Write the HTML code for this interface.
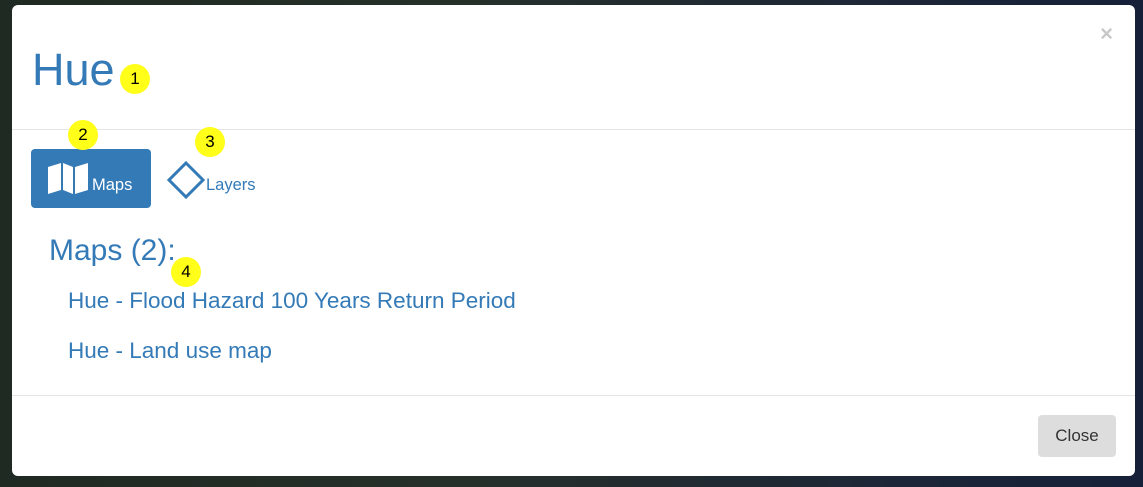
<!DOCTYPE html>
<html><head><style>
body{margin:0;width:1143px;height:487px;overflow:hidden;background:linear-gradient(90deg,#1f2a22 0%,#26302a 40%,#1c2638 80%,#162038 100%);font-family:"Liberation Sans",sans-serif;position:relative}
.m{position:absolute;left:12px;top:5px;width:1123px;height:471px;background:#fff;border-radius:6px}
.t{position:absolute;left:20px;top:42px;font-size:45px;color:#337ab7;line-height:1}
.x{position:absolute;right:22px;top:16px;font-size:22px;font-weight:bold;color:#c8c8c8}
.hr{position:absolute;left:0;right:0;height:1px;background:#e5e5e5}
.c{position:absolute;width:30px;height:30px;border-radius:50%;background:#ffff1a;font-size:17px;text-align:center;line-height:30px;color:#000}
.btn{position:absolute;left:19px;top:144px;width:120px;height:59px;background:#337ab7;border-radius:4px}
.a{position:absolute;color:#337ab7;line-height:1}
.cl{position:absolute;left:1026px;top:410px;width:78px;height:42px;background:#ddd;border-radius:4px;color:#333;font-size:17px;text-align:center;line-height:42px}
</style></head><body>
<div class="m">
<div class="t">Hue</div>
<div class="x">×</div>
<div class="c" style="left:108px;top:59px">1</div>
<div class="hr" style="top:124px"></div>
<div class="btn"><svg width="120" height="59" viewBox="0 0 120 59"><path d="M17 18 L30 14 L30 41 L17 45Z M32 14 L42 18 L42 45 L32 41Z M44 18 L57 14 L57 41 L44 45Z" fill="#fff"/></svg><span class="a" style="left:61px;top:28px;color:#fff;font-size:16.5px">Maps</span></div>
<div class="c" style="left:56px;top:115px">2</div>
<svg style="position:absolute;left:154px;top:155px" width="42" height="42"><path d="M20 3 L37 20 L20 37 L3 20Z" fill="none" stroke="#337ab7" stroke-width="3"/></svg>
<div class="a" style="left:194px;top:172px;font-size:16.5px">Layers</div>
<div class="c" style="left:183px;top:122px">3</div>
<div class="a" style="left:37px;top:231px;font-size:30px">Maps (2):</div>
<div class="c" style="left:159px;top:252px">4</div>
<div class="a" style="left:56px;top:285px;font-size:22.5px">Hue - Flood Hazard 100 Years Return Period</div>
<div class="a" style="left:56px;top:335px;font-size:22.5px">Hue - Land use map</div>
<div class="hr" style="top:390px"></div>
<div class="cl">Close</div>
</div>
</body></html>
